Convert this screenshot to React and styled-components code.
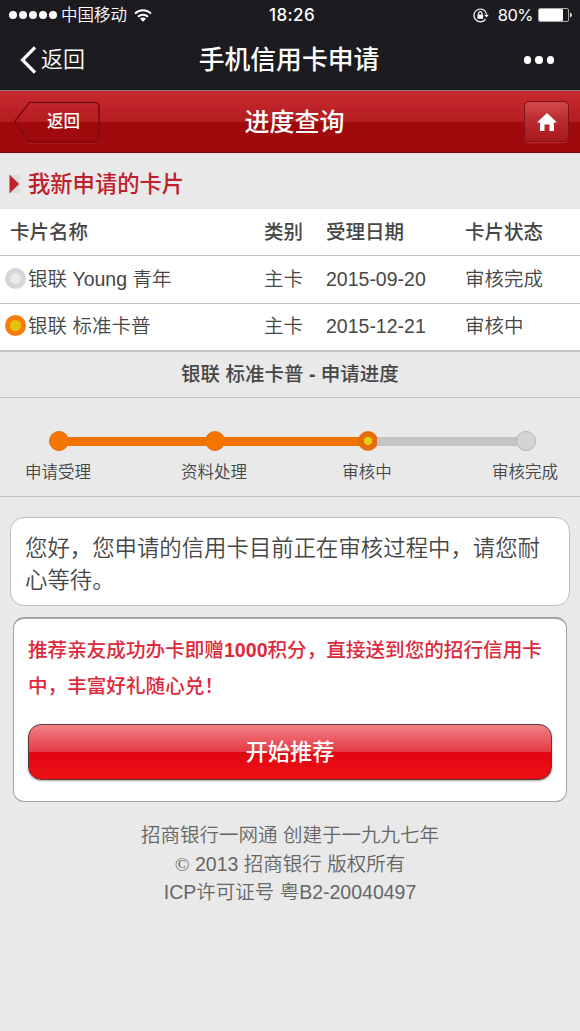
import React from 'react';
import styled, { createGlobalStyle } from 'styled-components';

const variables = {
    colorBar: '#1c1b20',
    colorPage: '#e9e9e9',
    colorText: '#464646',
    colorRed: '#c0202c',
    colorOrange: '#ef7203',
    colorLine: '#c4c4c4'
};

const GlobalStyle = createGlobalStyle`
    * {
        box-sizing: border-box;
    }

    body {
        margin: 0;
        background-color: ${variables.colorPage};
        color: ${variables.colorText};
        font-family: "Liberation Sans", "Noto Sans CJK SC", sans-serif;
    }
`;

const Page = styled.div`
    width: 580px;
    min-height: 1031px;
    background-color: ${variables.colorPage};
    overflow: hidden;
`;

const StatusBar = styled.div`
    height: 30px;
    padding: 0 8px 0 9px;
    display: grid;
    grid-template-columns: 1fr auto 1fr;
    align-items: center;
    background-color: ${variables.colorBar};
    color: #fff;
    font-size: 16.5px;
    line-height: 30px;
    white-space: nowrap;
`;

const StatusGroup = styled.div`
    display: flex;
    align-items: center;
    justify-content: ${props => props.$end ? 'flex-end' : 'flex-start'};
`;

const Clock = styled.div`
    margin-left: 3px;
    font-family: Inter, "Liberation Sans", sans-serif;
    font-size: 17px;
    font-weight: 500;
    letter-spacing: .4px;
`;

const Percent = styled.span`
    margin: 0 5px 0 9px;
    font-family: Inter, "Liberation Sans", sans-serif;
    font-size: 16.5px;
    letter-spacing: -.5px;
`;

const Carrier = styled.span`
    margin: 0 7px 0 4px;
    font-weight: 350;
`;

const NavBar = styled.div`
    height: 60px;
    padding: 0 26px 0 20px;
    display: grid;
    grid-template-columns: 1fr auto 1fr;
    align-items: center;
    background-color: ${variables.colorBar};
    color: #fff;
`;

const NavBack = styled.div`
    display: flex;
    align-items: center;
    gap: 5px;
    font-size: 22px;
    line-height: 30px;
    font-weight: 350;
`;

const NavTitle = styled.div`
    margin-left: 4px;
    font-size: 25.8px;
    line-height: 36px;
    font-weight: 500;
`;

const MoreDots = styled.div`
    display: flex;
    justify-content: flex-end;
    gap: 4px;
`;

const Dot = styled.i`
    width: ${props => props.$size}px;
    height: ${props => props.$size}px;
    border-radius: 50%;
    background-color: #fff;
`;

const SignalDots = styled.div`
    display: flex;
    gap: 2px;
`;

const Header = styled.header`
    height: 63px;
    padding: 1px 11px 0 14px;
    display: grid;
    grid-template-columns: 1fr auto 1fr;
    align-items: center;
    border-top: 1px solid #94787a;
    border-bottom: 1px solid #7a0b0d;
    background: linear-gradient(#c62a2f 0, #b51d21 50%, #a00a0d 50%, #a00a0d 100%);
    color: #fff;
`;

const HeaderBack = styled.div`
    width: 86px;
    height: 43px;
    display: grid;

    & > * {
        grid-area: 1 / 1;
    }

    & span {
        padding-left: 33px;
        font-size: 16.5px;
        line-height: 41px;
        font-weight: 500;
        z-index: 1;
    }
`;

const HeaderTitle = styled.h1`
    margin: 0 0 0 6px;
    font-size: 25px;
    line-height: 36px;
    font-weight: 500;
`;

const HomeButton = styled.div`
    width: 45px;
    height: 41px;
    margin-bottom: 1px;
    justify-self: end;
    display: flex;
    align-items: center;
    justify-content: center;
    border: 1px solid #7f1013;
    border-radius: 5px;
    background: linear-gradient(#d4484c, #b92a2e 50%, #a81a1e);
    box-shadow: 0 1px 1px rgba(255, 120, 120, .35);
`;

const SectionTitle = styled.h2`
    height: 56px;
    margin: 0;
    padding: 7px 9px 0;
    display: flex;
    align-items: center;
    gap: 8px;
    color: ${variables.colorRed};
    font-size: 22.3px;
    line-height: 32px;
    font-weight: 500;

    & svg {
        margin-bottom: 2px;
    }
`;

const Row = styled.div`
    height: ${props => props.$height || 48}px;
    padding: 0 0 ${props => props.$head ? 0 : 2}px ${props => props.$head ? 10 : 5}px;
    display: grid;
    grid-template-columns: ${props => props.$head ? 254 : 259}px 62px 139px 1fr;
    align-items: center;
    border-bottom: ${props => props.$last ? 2 : 1}px solid ${variables.colorLine};
    background-color: #fff;
    font-size: 19.5px;
    line-height: 28px;
    font-weight: ${props => props.$head ? 500 : 350};
`;

const CardName = styled.div`
    display: flex;
    align-items: center;
    gap: 2px;
`;

const Radio = styled.i`
    width: 21px;
    height: 21px;
    margin-bottom: 1px;
    border-radius: 50%;
    border: 5px solid ${props => props.$active ? '#f77b08' : '#d6d6d6'};
    background-color: ${props => props.$active ? '#e3c60a' : '#e9e9e9'};
`;

const SubTitle = styled.h3`
    height: 46px;
    margin: 0;
    border-bottom: 1px solid ${variables.colorLine};
    text-align: center;
    font-size: 19.5px;
    line-height: 45px;
    font-weight: 500;

    & b {
        font-weight: 700;
    }
`;

const Progress = styled.div`
    height: 99px;
    padding: 33px 0 0 49px;
    display: flex;
    border-bottom: 1px solid ${variables.colorLine};
`;

const Step = styled.div`
    width: 20px;
    display: flex;
    flex-direction: column;
    align-items: center;
    font-size: 16.5px;
    line-height: 24px;
    font-weight: 350;
    white-space: nowrap;

    & span {
        margin: 9px 2px 0 0;
    }
`;

const StepDot = styled.i`
    width: 20px;
    height: 20px;
    flex: none;
    border-radius: 50%;
    border: ${props => props.$state === 'current' ? '6px' : '1px'} solid ${props => props.$state === 'todo' ? '#b2b2b2' : '#e46f0a'};
    background-color: ${props => ({ done: '#f47600', current: '#e6d010', todo: '#d4d4d4' })[props.$state]};
`;

const Segment = styled.div`
    width: ${props => props.$width + 2}px;
    height: 9px;
    margin: 6px -1px 0;
    background-color: ${props => props.$done ? variables.colorOrange : variables.colorLine};
`;

const Message = styled.div`
    height: 89px;
    margin: 20px 10px 0;
    padding: 15px 14px 0;
    border: 1px solid #bcbcbc;
    border-radius: 14px;
    background-color: #fff;
    font-size: 22.4px;
    line-height: 32px;
    font-weight: 350;
`;

const Promo = styled.div`
    height: 185px;
    margin: 11px 13px 0;
    padding: 13px 14px 0;
    border: 1px solid #a4a4a4;
    border-top-width: 2px;
    border-radius: 11px;
    background-color: #fff;
`;

const PromoText = styled.p`
    margin: 0;
    color: #dc2a3c;
    font-size: 19.6px;
    line-height: 36px;
    font-weight: 500;
    white-space: nowrap;

    & b {
        font-weight: 700;
    }
`;

const Button = styled.button`
    width: 524px;
    height: 56px;
    margin-top: 20px;
    padding: 2px 0 0;
    display: block;
    border: 1px solid #5b3a3c;
    border-radius: 13px;
    background: linear-gradient(#f28088 0, #e63a43 50%, #e10612 50%, #ec1014 100%);
    box-shadow: 0 1px 2px rgba(0, 0, 0, .35);
    color: #fff;
    font-family: inherit;
    font-size: 22.2px;
    line-height: 52px;
    font-weight: 500;
`;

const Footer = styled.footer`
    padding-top: 19px;
    color: #666;
    text-align: center;
    font-size: 19.5px;
    font-weight: 350;

    & div {
        height: 28.6px;
        line-height: 28px;
    }
`;

const Copyright = styled.span`
    font-family: "Liberation Serif", serif;
    line-height: 1;
`;

const cards = [
    { name: '银联 Young 青年', type: '主卡', date: '2015-09-20', status: '审核完成' },
    { name: '银联 标准卡普', type: '主卡', date: '2015-12-21', status: '审核中', active: true }
];

const steps = [
    { label: '申请受理', state: 'done' },
    { label: '资料处理', state: 'done', gap: 136 },
    { label: '审核中', state: 'current', gap: 133 },
    { label: '审核完成', state: 'todo', gap: 138 }
];

const WifiIcon = () => (
    <svg width="18" height="13" viewBox="0 0 18 13" fill="none" stroke="#fff" strokeWidth="2">
        <path d="M1 4.6a11.3 11.3 0 0 1 16 0" />
        <path d="M4 7.7a7.1 7.1 0 0 1 10 0" />
        <path d="M9 12.7L6 9.8a4.2 4.2 0 0 1 6 0z" fill="#fff" stroke="none" />
    </svg>
);

const LockIcon = () => (
    <svg width="16" height="15" viewBox="0 0 16 15" fill="none" stroke="#fff">
        <path d="M12.6 11.1A6.4 6.4 0 1 1 13.7 6.5" strokeWidth="1.2" />
        <path d="M11.2 6.8h4.6l-2.3 2.8z" fill="#fff" stroke="none" />
        <rect x="4.4" y="6.5" width="5.8" height="4.3" fill="#fff" stroke="none" />
        <path d="M5.6 6.8V5.3a1.7 1.7 0 0 1 3.4 0v1.5" strokeWidth="1.1" />
    </svg>
);

const BatteryIcon = () => (
    <svg width="34" height="14" viewBox="0 0 34 14">
        <rect x=".5" y=".5" width="30" height="13" rx="1.5" fill="none" stroke="#aaa" />
        <rect x="1" y="1" width="24" height="12" rx="1" fill="#fff" />
        <path d="M32 4.5q2 .7 2 2.5t-2 2.5z" fill="#ddd" />
    </svg>
);

class App extends React.Component {
    renderCard(card, idx) {
        return (
            <Row key={card.date} $last={idx === cards.length - 1}>
                <CardName>
                    <Radio $active={card.active} />
                    {card.name}
                </CardName>
                <div>{card.type}</div>
                <div>{card.date}</div>
                <div>{card.status}</div>
            </Row>
        );
    }

    renderStep(step) {
        return (
            <React.Fragment key={step.label}>
                {step.gap && <Segment $width={step.gap} $done={step.state !== 'todo'} />}
                <Step>
                    <StepDot $state={step.state} />
                    <span>{step.label}</span>
                </Step>
            </React.Fragment>
        );
    }

    render() {
        return (
            <Page>
                <GlobalStyle />
                <StatusBar>
                    <StatusGroup>
                        <SignalDots>
                            {[1, 2, 3, 4, 5].map(n => <Dot key={n} $size={8} />)}
                        </SignalDots>
                        <Carrier>中国移动</Carrier>
                        <WifiIcon />
                    </StatusGroup>
                    <Clock>18:26</Clock>
                    <StatusGroup $end>
                        <LockIcon />
                        <Percent>80%</Percent>
                        <BatteryIcon />
                    </StatusGroup>
                </StatusBar>
                <NavBar>
                    <NavBack>
                        <svg width="16" height="28" viewBox="0 0 16 28" fill="none" stroke="#fff" strokeWidth="3.2">
                            <path d="M15 1.5L2.5 14L15 26.5" />
                        </svg>
                        返回
                    </NavBack>
                    <NavTitle>手机信用卡申请</NavTitle>
                    <MoreDots>
                        {[1, 2, 3].map(n => <Dot key={n} $size={7.4} />)}
                    </MoreDots>
                </NavBar>
                <Header>
                    <HeaderBack>
                        <svg width="86" height="43" viewBox="0 0 86 43" fill="none">
                            <path d="M15.5 2.5H81a4 4 0 0 1 4 4V38a4 4 0 0 1-4 4H15.5L1.5 23.5q-1-1.5 0-3z" stroke="#d0484b" strokeOpacity=".45" />
                            <path d="M15.5 1.5H81a4 4 0 0 1 4 4V37a4 4 0 0 1-4 4H15.5L1.5 22.5q-1-1.5 0-3z" stroke="#7d080b" strokeWidth="1.6" />
                        </svg>
                        <span>返回</span>
                    </HeaderBack>
                    <HeaderTitle>进度查询</HeaderTitle>
                    <HomeButton>
                        <svg width="20" height="18" viewBox="0 0 20 18" fill="#fff">
                            <path d="M10 0L20 9.5H17V18H12.5V11.5H7.5V18H3V9.5H0z" />
                        </svg>
                    </HomeButton>
                </Header>
                <SectionTitle>
                    <svg width="11" height="20" viewBox="0 0 11 20">
                        <rect x="2" y="1" width="9" height="18" fill="#dcdcdc" />
                        <path d="M.5 .5L10 10L.5 19.5z" fill={variables.colorRed} />
                    </svg>
                    我新申请的卡片
                </SectionTitle>
                <Row $head $height={47}>
                    <div>卡片名称</div>
                    <div>类别</div>
                    <div>受理日期</div>
                    <div>卡片状态</div>
                </Row>
                {cards.map((card, idx) => this.renderCard(card, idx))}
                <SubTitle>银联 标准卡普 <b>-</b> 申请进度</SubTitle>
                <Progress>
                    {steps.map(step => this.renderStep(step))}
                </Progress>
                <Message>您好，您申请的信用卡目前正在审核过程中，请您耐心等待。</Message>
                <Promo>
                    <PromoText>
                        推荐亲友成功办卡即赠<b>1000</b>积分，直接送到您的招行信用卡<br />
                        中，丰富好礼随心兑！
                    </PromoText>
                    <Button>开始推荐</Button>
                </Promo>
                <Footer>
                    <div>招商银行一网通 创建于一九九七年</div>
                    <div><Copyright>©</Copyright> 2013 招商银行 版权所有</div>
                    <div>ICP许可证号 粤B2-20040497</div>
                </Footer>
            </Page>
        );
    }
}

export default App;
